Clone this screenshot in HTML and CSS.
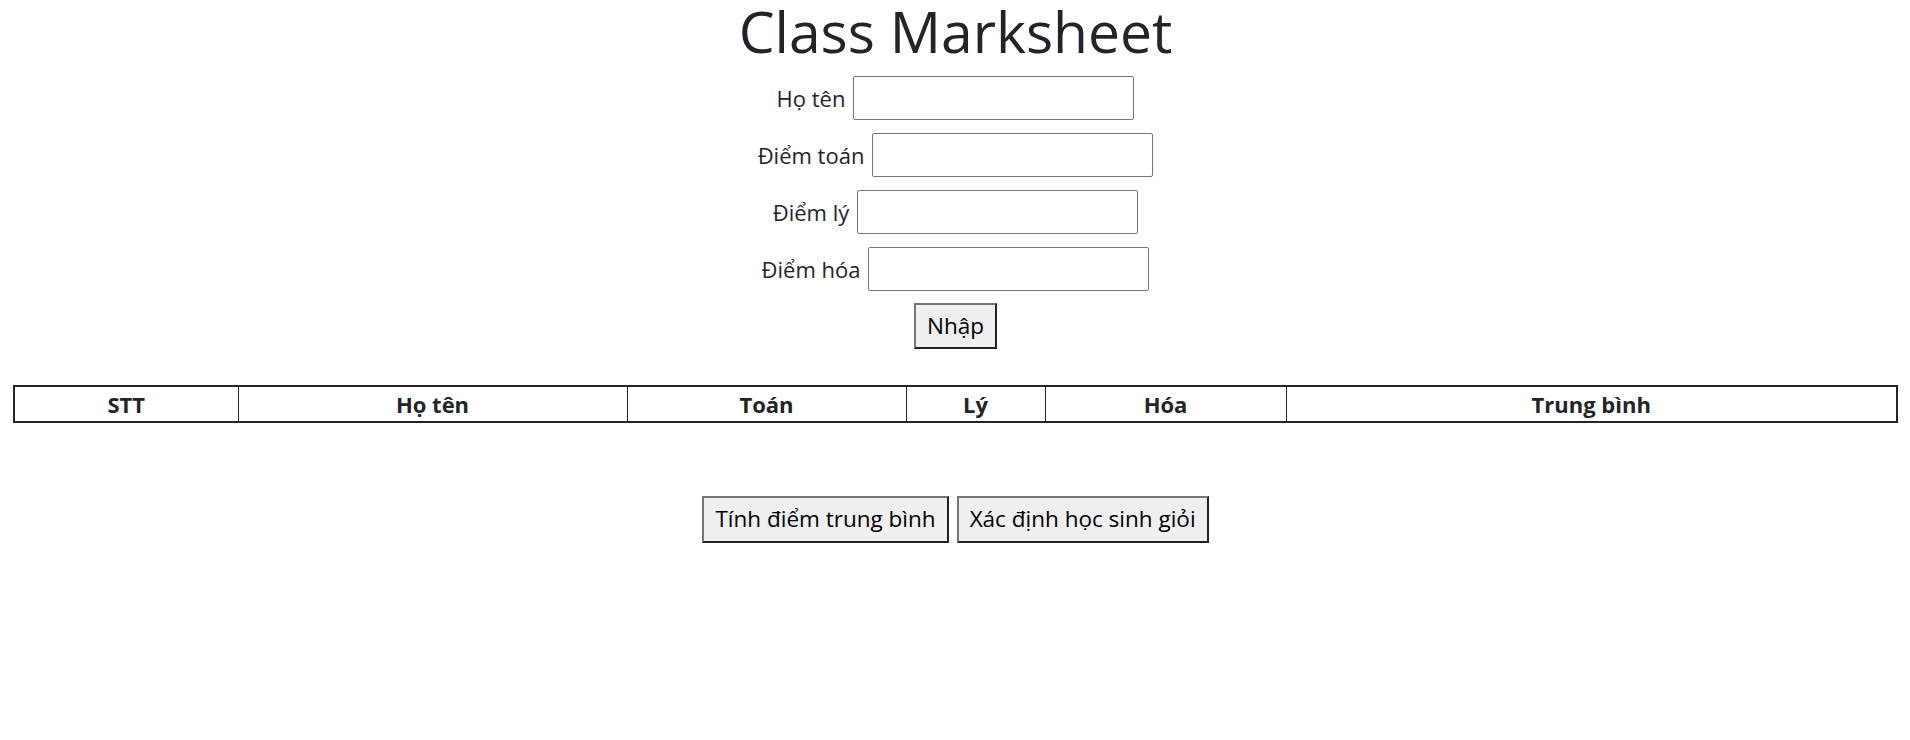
FILE: index.html
```html
<!DOCTYPE html>
<html lang="vi">
<head>
<meta charset="utf-8">
<title>Class Marksheet</title>
<link rel="stylesheet" href="styles.css">
</head>
<body>
<div class="page">
  <h1 class="title">Class Marksheet</h1>
  <form class="entry-form">
    <div class="field"><label class="field-label" for="name">Họ tên</label><input class="field-input" id="name" type="text"></div>
    <div class="field"><label class="field-label" for="math">Điểm toán</label><input class="field-input" id="math" type="text"></div>
    <div class="field"><label class="field-label" for="phys">Điểm lý</label><input class="field-input" id="phys" type="text"></div>
    <div class="field"><label class="field-label" for="chem">Điểm hóa</label><input class="field-input" id="chem" type="text"></div>
    <div class="submit-row"><button class="btn" type="button">Nhập</button></div>
  </form>
  <table class="marks">
    <colgroup>
      <col class="c-stt"><col class="c-name"><col class="c-math"><col class="c-phys"><col class="c-chem"><col class="c-avg">
    </colgroup>
    <thead>
      <tr><th>STT</th><th>Họ tên</th><th>Toán</th><th>Lý</th><th>Hóa</th><th>Trung bình</th></tr>
    </thead>
    <tbody></tbody>
  </table>
  <div class="actions">
    <button class="btn" type="button">Tính điểm trung bình</button>
    <button class="btn" type="button">Xác định học sinh giỏi</button>
  </div>
</div>
</body>
</html>
```

FILE: styles.css
```css
* { box-sizing: border-box; }
html, body { margin: 0; padding: 0; background: #fff; }
body {
  font-family: "Open Sans", "Noto Sans", "Liberation Sans", sans-serif;
  color: #212529;
  font-size: 22px;
}
.page {
  display: flex;
  flex-direction: column;
  align-items: center;
  padding: 0 13px 0 14px;
}
.title {
  margin: -4px 0 0;
  font-size: 57px;
  font-weight: 500;
  line-height: 70px;
  color: #212529;
}
.entry-form {
  margin-top: 10px;
  display: flex;
  flex-direction: column;
  align-items: center;
  gap: 13px;
}
.field {
  display: flex;
  align-items: center;
  gap: 8px;
}
.field-label { font-size: 22px; color: #212529; }
.field-input {
  width: 281px;
  height: 44px;
  border: 1px solid #767676;
  border-radius: 2px;
  background: #fff;
  font: inherit;
  padding: 2px 4px;
}
.submit-row { margin-top: -1px; }
.btn {
  font-family: inherit;
  font-size: 22.5px;
  color: #000;
  background: #efefef;
  border: 2px solid;
  border-color: #767676 #222 #222 #767676;
  height: 46px;
  padding: 0 11px;
  line-height: 1;
}
.marks {
  margin-top: 36px;
  width: 100%;
  table-layout: fixed;
  border-collapse: collapse;
  border: 2px solid #212529;
}
.marks th {
  border: 1px solid #212529;
  font-weight: 700;
  font-size: 22px;
  line-height: 34px;
  padding: 0;
  text-align: center;
}
.c-stt { width: 224px; }
.c-name { width: 389px; }
.c-math { width: 279px; }
.c-phys { width: 139px; }
.c-chem { width: 241px; }
.c-avg { width: 611px; }
.actions {
  margin-top: 73px;
  display: flex;
  gap: 8px;
  justify-content: center;
}
.actions .btn { height: 47px; }
```
